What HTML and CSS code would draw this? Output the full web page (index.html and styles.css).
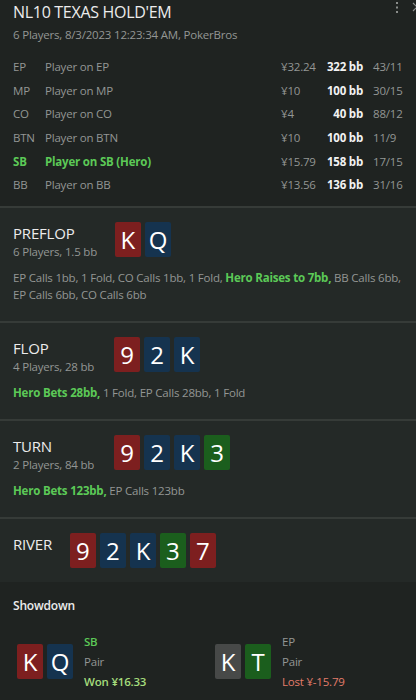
FILE: index.html
```html
<!DOCTYPE html>
<html lang="en">
<head>
  <meta charset="UTF-8">
  <meta name="viewport" content="width=device-width, initial-scale=1.0">
  <title>NL10 Texas Hold'em</title>
  <link rel="stylesheet" href="styles.css">
</head>
<body>
  <div class="hand">
    <div class="header">
      <h1>NL10 TEXAS HOLD'EM</h1>
      <svg class="menu" width="4" height="12" viewBox="0 0 4 12">
        <rect x="1" y="1" width="2" height="2" fill="#8a8d8b"/>
        <rect x="1" y="5.5" width="2" height="2" fill="#8a8d8b"/>
        <rect x="1" y="10" width="2" height="2" fill="#8a8d8b"/>
      </svg>
      <svg class="close" width="10" height="12" viewBox="0 0 10 12">
        <path d="M1 2 L9 10 M9 2 L1 10" stroke="#8a8d8b" stroke-width="1.2" fill="none"/>
      </svg>
      <div class="sub">6 Players, 8/3/2023 12:23:34 AM, PokerBros</div>
      <div class="players">
        <div class="row"><span class="pos">EP</span><span class="name">Player on EP</span><span class="money">¥32.24</span><span class="bb">322 bb</span><span class="stat">43/11</span></div>
        <div class="row"><span class="pos">MP</span><span class="name">Player on MP</span><span class="money">¥10</span><span class="bb">100 bb</span><span class="stat">30/15</span></div>
        <div class="row"><span class="pos">CO</span><span class="name">Player on CO</span><span class="money">¥4</span><span class="bb">40 bb</span><span class="stat">88/12</span></div>
        <div class="row"><span class="pos">BTN</span><span class="name">Player on BTN</span><span class="money">¥10</span><span class="bb">100 bb</span><span class="stat">11/9</span></div>
        <div class="row hero"><span class="pos">SB</span><span class="name">Player on SB (Hero)</span><span class="money">¥15.79</span><span class="bb">158 bb</span><span class="stat">17/15</span></div>
        <div class="row"><span class="pos">BB</span><span class="name">Player on BB</span><span class="money">¥13.56</span><span class="bb">136 bb</span><span class="stat">31/16</span></div>
      </div>
    </div>

    <div class="street">
      <div class="street-head">
        <div class="street-info">
          <h2>PREFLOP</h2>
          <div class="street-sub">6 Players, 1.5 bb</div>
        </div>
        <div class="cards">
          <span class="card red">K</span><span class="card blue">Q</span>
        </div>
      </div>
      <p class="actions">EP Calls 1bb, 1 Fold, CO Calls 1bb, 1 Fold, <b>Hero Raises to 7bb,</b> BB Calls 6bb, EP Calls 6bb, CO Calls 6bb</p>
    </div>

    <div class="street">
      <div class="street-head">
        <div class="street-info">
          <h2>FLOP</h2>
          <div class="street-sub">4 Players, 28 bb</div>
        </div>
        <div class="cards">
          <span class="card red">9</span><span class="card blue">2</span><span class="card blue">K</span>
        </div>
      </div>
      <p class="actions"><b>Hero Bets 28bb,</b> 1 Fold, EP Calls 28bb, 1 Fold</p>
    </div>

    <div class="street">
      <div class="street-head">
        <div class="street-info">
          <h2>TURN</h2>
          <div class="street-sub">2 Players, 84 bb</div>
        </div>
        <div class="cards">
          <span class="card red">9</span><span class="card blue">2</span><span class="card blue">K</span><span class="card green">3</span>
        </div>
      </div>
      <p class="actions"><b>Hero Bets 123bb,</b> EP Calls 123bb</p>
    </div>

    <div class="street river">
      <div class="street-head">
        <div class="street-info">
          <h2>RIVER</h2>
        </div>
        <div class="cards">
          <span class="card red">9</span><span class="card blue">2</span><span class="card blue">K</span><span class="card green">3</span><span class="card red">7</span>
        </div>
      </div>
    </div>

    <div class="showdown">
      <h3>Showdown</h3>
      <div class="results">
        <div class="result">
          <div class="cards">
            <span class="card red">K</span><span class="card blue">Q</span>
          </div>
          <div class="result-info">
            <div class="hero-text">SB</div>
            <div>Pair</div>
            <div class="won">Won ¥16.33</div>
          </div>
        </div>
        <div class="result">
          <div class="cards">
            <span class="card gray">K</span><span class="card green">T</span>
          </div>
          <div class="result-info">
            <div>EP</div>
            <div>Pair</div>
            <div class="lost">Lost ¥-15.79</div>
          </div>
        </div>
      </div>
    </div>
  </div>
</body>
</html>
```

FILE: styles.css
```css
body {
  margin: 0;
  background: #1f2321;
  color: #939694;
  font-family: "Open Sans", "Noto Sans", sans-serif;
  font-size: 11.5px;
  letter-spacing: -0.2px;
}
.hand {
  width: 416px;
  height: 700px;
  overflow: hidden;
}
.header {
  position: relative;
  padding: 0 13px 9px;
  background: #1f2321;
  border-bottom: 2px solid #363b38;
}
h1 {
  margin: 0;
  padding-top: 1px;
  font-size: 16px;
  font-weight: 400;
  letter-spacing: -0.3px;
  color: #ececec;
  line-height: 22px;
}
.menu {
  position: absolute;
  top: 1px;
  right: 17px;
}
.close {
  position: absolute;
  top: 1px;
  right: -6px;
}
.sub {
  margin-top: 1px;
  line-height: 22px;
}
.players {
  margin-top: 9px;
}
.row {
  display: grid;
  grid-template-columns: 32px 1fr 42px 40px 40px;
  height: 23.6px;
  align-items: center;
}
.row .bb {
  text-align: right;
  font-weight: 700;
  color: #f2f2f2;
}
.row .stat {
  padding-left: 10px;
}
.row.hero .pos,
.row.hero .name {
  color: #5cc957;
  font-weight: 700;
}
.street {
  background: #242927;
  padding: 14px 13px 18px;
  border-bottom: 2px solid #363b38;
}
.street-head {
  display: flex;
  gap: 18px;
}
.street-info {
  min-width: 83px;
}
.river .street-info {
  min-width: 0;
}
h2 {
  margin: 0;
  padding-top: 1px;
  font-size: 15px;
  font-weight: 400;
  letter-spacing: -0.2px;
  color: #ececec;
  line-height: 20px;
}
.street-sub {
  line-height: 18px;
  white-space: nowrap;
}
.cards {
  display: flex;
  gap: 4px;
}
.card {
  width: 26px;
  height: 35px;
  border-radius: 2px;
  color: #fff;
  font-size: 24px;
  letter-spacing: 0;
  line-height: 35px;
  text-align: center;
}
.red { background: #7d1f1f; }
.blue { background: #15334f; }
.green { background: #1b5e1d; }
.gray { background: #474948; }
.actions {
  margin: 8px 0 0;
  line-height: 17px;
}
.actions b {
  color: #5cc957;
}
.river {
  padding-bottom: 14px;
  border-bottom: none;
}
.showdown {
  background: #1f2321;
  padding: 15px 13px 20px;
}
h3 {
  margin: 0;
  font-size: 12px;
  font-weight: 600;
  line-height: 17px;
  color: #ececec;
}
.results {
  display: flex;
  margin-top: 18px;
  padding-left: 4px;
}
.result {
  flex: 0 0 198px;
  display: flex;
  align-items: center;
  gap: 11px;
}
.result-info div {
  line-height: 20px;
}
.hero-text {
  color: #5cc957;
  font-weight: 600;
}
.won {
  color: #a4dc7c;
  font-weight: 600;
}
.lost {
  color: #e37c6a;
}
```
